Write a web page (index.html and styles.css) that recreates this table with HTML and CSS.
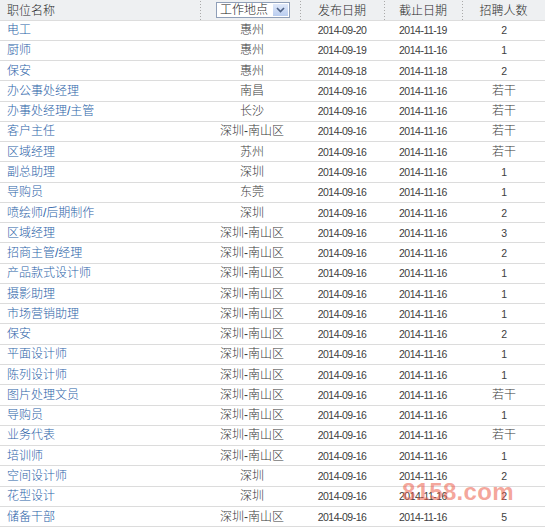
FILE: index.html
```html
<!DOCTYPE html>
<html lang="zh-CN">
<head>
<meta charset="utf-8">
<title>职位列表</title>
<link rel="stylesheet" href="styles.css">
</head>
<body>
<div class="wrap">
<table class="jobs">
  <colgroup>
    <col class="c-name"><col class="c-loc"><col class="c-pub"><col class="c-end"><col class="c-num">
  </colgroup>
  <thead>
    <tr>
      <th class="name">职位名称</th>
      <th class="loc"><div class="fake-select"><span class="fs-text">工作地点</span><span class="fs-btn"><svg width="9" height="6" viewBox="0 0 9 6"><path d="M1 1 L4.5 4.5 L8 1" fill="none" stroke="#4d6185" stroke-width="1.6"/></svg></span></div></th>
      <th class="sep">发布日期</th>
      <th class="sep">截止日期</th>
      <th class="sep">招聘人数</th>
    </tr>
  </thead>
  <tbody>
    <tr><td class="name"><a href="#">电工</a></td><td class="loc">惠州</td><td class="date">2014-09-20</td><td class="date">2014-11-19</td><td class="num digit">2</td></tr>
    <tr><td class="name"><a href="#">厨师</a></td><td class="loc">惠州</td><td class="date">2014-09-19</td><td class="date">2014-11-16</td><td class="num digit">1</td></tr>
    <tr><td class="name"><a href="#">保安</a></td><td class="loc">惠州</td><td class="date">2014-09-18</td><td class="date">2014-11-18</td><td class="num digit">2</td></tr>
    <tr><td class="name"><a href="#">办公事处经理</a></td><td class="loc">南昌</td><td class="date">2014-09-16</td><td class="date">2014-11-16</td><td class="num">若干</td></tr>
    <tr><td class="name"><a href="#">办事处经理/主管</a></td><td class="loc">长沙</td><td class="date">2014-09-16</td><td class="date">2014-11-16</td><td class="num">若干</td></tr>
    <tr><td class="name"><a href="#">客户主任</a></td><td class="loc">深圳-南山区</td><td class="date">2014-09-16</td><td class="date">2014-11-16</td><td class="num">若干</td></tr>
    <tr><td class="name"><a href="#">区域经理</a></td><td class="loc">苏州</td><td class="date">2014-09-16</td><td class="date">2014-11-16</td><td class="num">若干</td></tr>
    <tr><td class="name"><a href="#">副总助理</a></td><td class="loc">深圳</td><td class="date">2014-09-16</td><td class="date">2014-11-16</td><td class="num digit">1</td></tr>
    <tr><td class="name"><a href="#">导购员</a></td><td class="loc">东莞</td><td class="date">2014-09-16</td><td class="date">2014-11-16</td><td class="num digit">1</td></tr>
    <tr><td class="name"><a href="#">喷绘师/后期制作</a></td><td class="loc">深圳</td><td class="date">2014-09-16</td><td class="date">2014-11-16</td><td class="num digit">2</td></tr>
    <tr><td class="name"><a href="#">区域经理</a></td><td class="loc">深圳-南山区</td><td class="date">2014-09-16</td><td class="date">2014-11-16</td><td class="num digit">3</td></tr>
    <tr><td class="name"><a href="#">招商主管/经理</a></td><td class="loc">深圳-南山区</td><td class="date">2014-09-16</td><td class="date">2014-11-16</td><td class="num digit">2</td></tr>
    <tr><td class="name"><a href="#">产品款式设计师</a></td><td class="loc">深圳-南山区</td><td class="date">2014-09-16</td><td class="date">2014-11-16</td><td class="num digit">1</td></tr>
    <tr><td class="name"><a href="#">摄影助理</a></td><td class="loc">深圳-南山区</td><td class="date">2014-09-16</td><td class="date">2014-11-16</td><td class="num digit">1</td></tr>
    <tr><td class="name"><a href="#">市场营销助理</a></td><td class="loc">深圳-南山区</td><td class="date">2014-09-16</td><td class="date">2014-11-16</td><td class="num digit">1</td></tr>
    <tr><td class="name"><a href="#">保安</a></td><td class="loc">深圳-南山区</td><td class="date">2014-09-16</td><td class="date">2014-11-16</td><td class="num digit">2</td></tr>
    <tr><td class="name"><a href="#">平面设计师</a></td><td class="loc">深圳-南山区</td><td class="date">2014-09-16</td><td class="date">2014-11-16</td><td class="num digit">1</td></tr>
    <tr><td class="name"><a href="#">陈列设计师</a></td><td class="loc">深圳-南山区</td><td class="date">2014-09-16</td><td class="date">2014-11-16</td><td class="num digit">1</td></tr>
    <tr><td class="name"><a href="#">图片处理文员</a></td><td class="loc">深圳-南山区</td><td class="date">2014-09-16</td><td class="date">2014-11-16</td><td class="num">若干</td></tr>
    <tr><td class="name"><a href="#">导购员</a></td><td class="loc">深圳-南山区</td><td class="date">2014-09-16</td><td class="date">2014-11-16</td><td class="num digit">1</td></tr>
    <tr><td class="name"><a href="#">业务代表</a></td><td class="loc">深圳-南山区</td><td class="date">2014-09-16</td><td class="date">2014-11-16</td><td class="num">若干</td></tr>
    <tr><td class="name"><a href="#">培训师</a></td><td class="loc">深圳-南山区</td><td class="date">2014-09-16</td><td class="date">2014-11-16</td><td class="num digit">1</td></tr>
    <tr><td class="name"><a href="#">空间设计师</a></td><td class="loc">深圳</td><td class="date">2014-09-16</td><td class="date">2014-11-16</td><td class="num digit">2</td></tr>
    <tr><td class="name"><a href="#">花型设计</a></td><td class="loc">深圳</td><td class="date">2014-09-16</td><td class="date">2014-11-16</td><td class="num digit">2</td></tr>
    <tr><td class="name"><a href="#">储备干部</a></td><td class="loc">深圳-南山区</td><td class="date">2014-09-16</td><td class="date">2014-11-16</td><td class="num digit">5</td></tr>
  </tbody>
</table>
<div class="watermark">8158.com</div>
</div>
</body>
</html>
```
FILE: styles.css
```css
html, body {
  margin: 0;
  padding: 0;
  background: #ffffff;
}
body {
  font-family: "Liberation Sans", "Noto Sans CJK SC", sans-serif;
  font-size: 12px;
  font-weight: 300;
  color: #3a3a3a;
}
.wrap {
  position: relative;
  width: 550px;
}
.jobs {
  width: 545px;
  border-collapse: collapse;
  table-layout: fixed;
}
.c-name { width: 200px; }
.c-loc { width: 100px; }
.c-pub { width: 84px; }
.c-end { width: 78px; }
.c-num { width: 83px; }

.jobs thead tr {
  background: #eef0f2;
  height: 20px;
}
.jobs th {
  font-weight: 300;
  color: #2a2a2a;
  padding: 0;
  text-align: center;
  border-bottom: 1px solid #dddddd;
  background-image: linear-gradient(#aaaaaa 50%, transparent 50%);
  background-size: 1px 3px;
  background-repeat: repeat-y;
  background-position: 0 1px;
}
.jobs th.name {
  text-align: left;
  padding-left: 7px;
  background-image: none;
}
.jobs tbody tr {
  height: 20.28px;
}
.jobs td {
  padding: 0;
  border-bottom: 1px solid #dcdcdc;
  text-align: center;
  white-space: nowrap;
  line-height: 14px;
}
.jobs td.name {
  text-align: left;
  padding-left: 7px;
}
.jobs td.name a {
  color: #2a62a8;
  text-decoration: none;
}
.jobs td.loc {
  padding-left: 4px;
}
.jobs td.date,
.jobs td.digit {
  font-family: "Liberation Sans", sans-serif;
  font-size: 10.5px;
  font-weight: normal;
  letter-spacing: -0.5px;
  color: #404040;
}
.jobs td.num {
  padding-left: 1px;
}

.fake-select {
  display: flex;
  align-items: center;
  width: 72px;
  height: 14px;
  margin-left: 16px;
  border: 1px solid #8f9fb8;
  background: #ffffff;
}
.fs-text {
  flex: 1;
  text-align: left;
  padding-left: 3px;
  font-size: 12px;
  line-height: 14px;
  color: #222222;
}
.fs-btn {
  width: 15px;
  height: 12px;
  margin-right: 1px;
  display: flex;
  align-items: center;
  justify-content: center;
  background: linear-gradient(#dfe8f9, #b9cdf0);
}

.watermark {
  position: absolute;
  left: 402px;
  top: 480px;
  font-family: "Liberation Sans", sans-serif;
  font-weight: bold;
  font-size: 24px;
  letter-spacing: 0.3px;
  color: rgba(236, 90, 70, 0.55);
  line-height: 24px;
  pointer-events: none;
}
```
